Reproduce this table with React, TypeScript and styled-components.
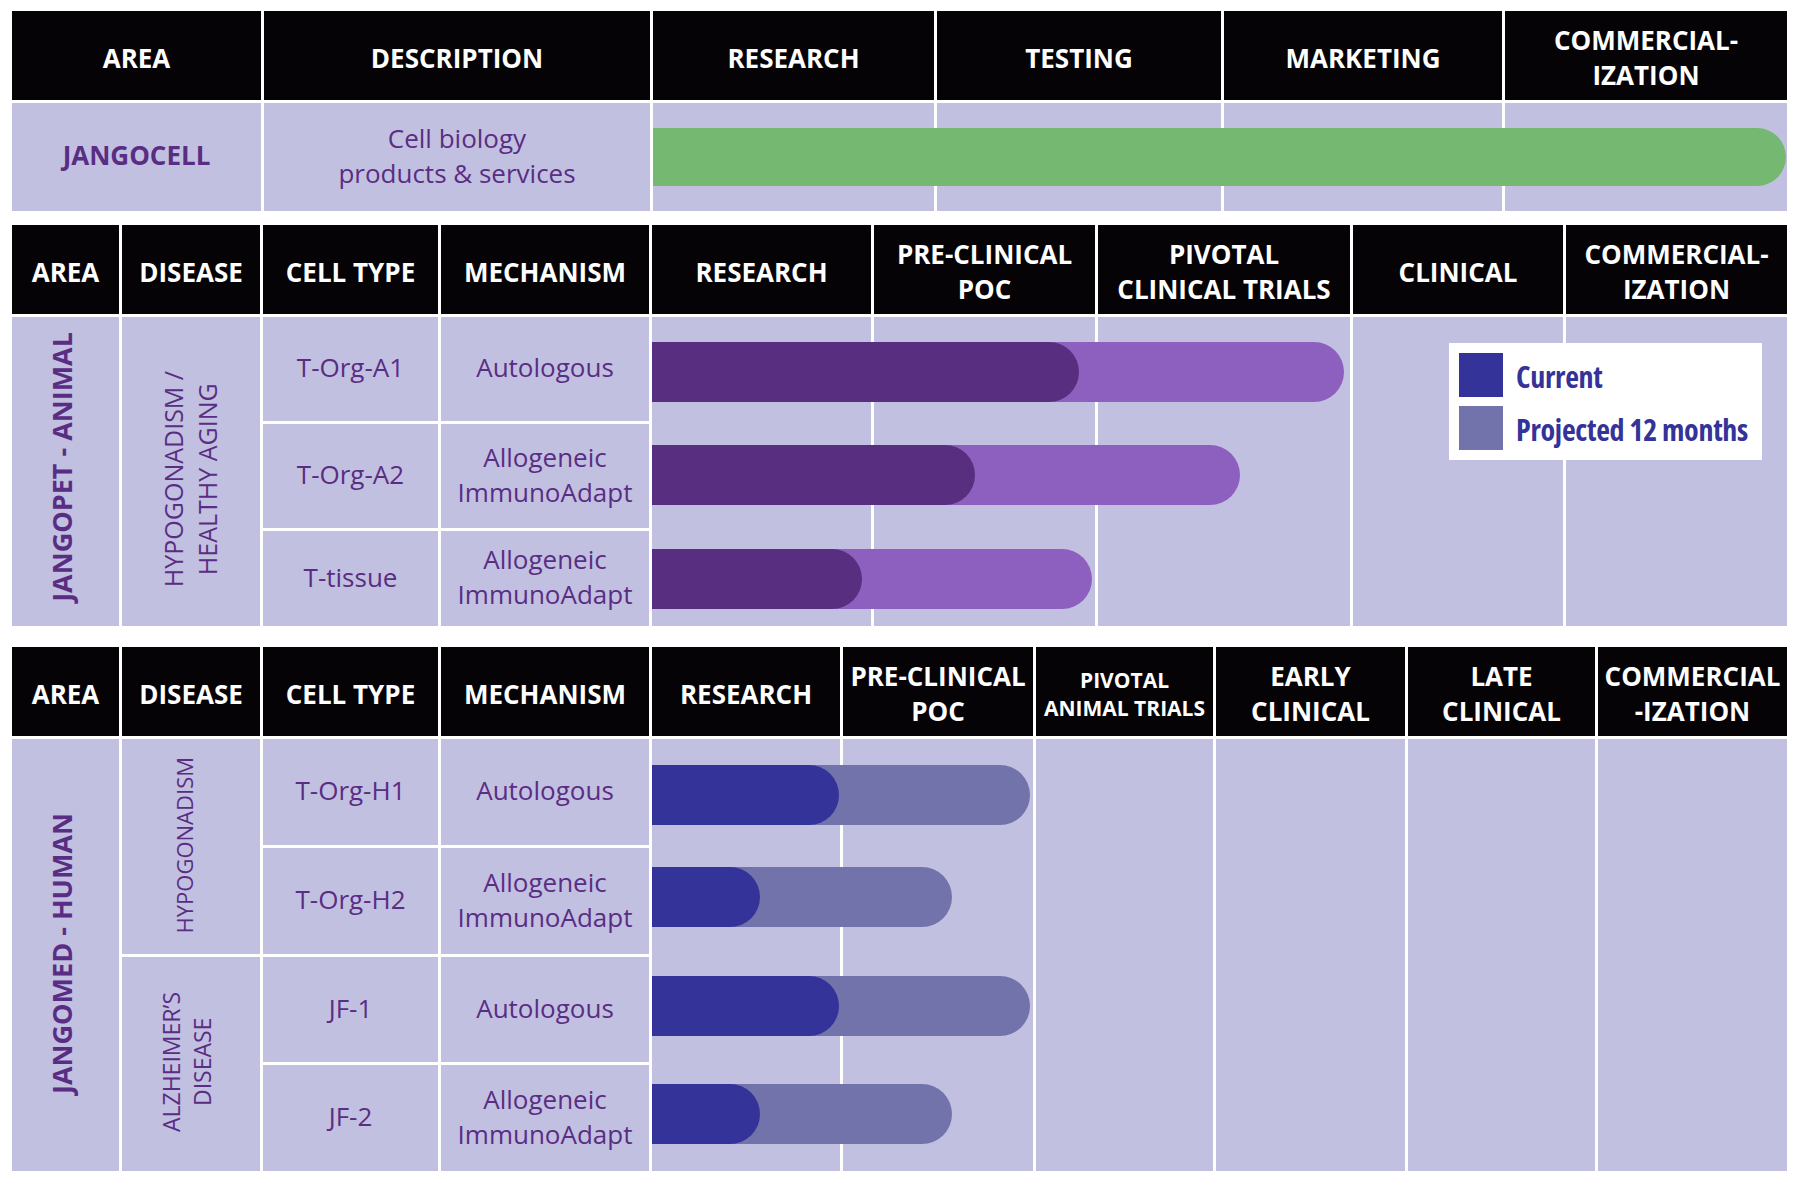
import React from "react";
import styled, { createGlobalStyle } from "styled-components";

const PURPLE = "#5a2d84";
const LAVENDER = "#c2c0e0";
const HEAD_BG = "#060306";

const GlobalStyle = createGlobalStyle`
  html, body { margin: 0; padding: 0; background: #ffffff; }
  body { font-family: "Open Sans", "Noto Sans", sans-serif; }
`;

const Page = styled.main`
  width: 1800px;
  height: 1185px;
  box-sizing: border-box;
  padding: 11px 13px 0 12px;
  display: flex;
  flex-direction: column;
  background: #ffffff;
`;

const Table = styled.section<{ $cols: number[]; $rows: number[]; $mt: number }>`
  display: grid;
  grid-template-columns: ${(p) => p.$cols.map((c) => `${c}px`).join(" ")};
  grid-template-rows: ${(p) => p.$rows.map((r) => `${r}px`).join(" ")};
  gap: 3px;
  margin-top: ${(p) => p.$mt}px;
`;

const HeadCell = styled.div<{ $small?: boolean }>`
  background: ${HEAD_BG};
  color: #ffffff;
  font-weight: 700;
  font-size: ${(p) => (p.$small ? 21 : 26)}px;
  line-height: ${(p) => (p.$small ? 28 : 35)}px;
  display: flex;
  align-items: center;
  justify-content: center;
  text-align: center;
  white-space: pre-line;
  box-sizing: border-box;
  padding-top: 5px;
`;

const BodyCell = styled.div<{ $area: string; $bold?: boolean }>`
  grid-area: ${(p) => p.$area};
  background: ${LAVENDER};
  color: ${PURPLE};
  font-weight: ${(p) => (p.$bold ? 700 : 400)};
  font-size: 26px;
  line-height: 35px;
  display: flex;
  align-items: center;
  justify-content: center;
  text-align: center;
  white-space: pre-line;
  box-sizing: border-box;
  padding-bottom: 3px;
`;

const VerticalText = styled.span<{
  $bold?: boolean;
  $size?: number;
  $lh?: number;
  $nudge?: number;
  $dy?: number;
}>`
  writing-mode: vertical-rl;
  transform: rotate(180deg);
  font-weight: ${(p) => (p.$bold ? 700 : 400)};
  font-size: ${(p) => p.$size ?? 25}px;
  line-height: ${(p) => p.$lh ?? 34}px;
  text-align: center;
  white-space: pre-line;
  margin: ${(p) => Math.max(0, (p.$dy ?? 0) * 2)}px ${(p) => (p.$nudge ?? 0) * 2}px
    ${(p) => Math.max(0, -(p.$dy ?? 0) * 2)}px 0;
`;

const PhaseStrip = styled.div<{ $col: number }>`
  grid-column: ${(p) => p.$col};
  grid-row: 2 / -1;
  background: ${LAVENDER};
`;

const BarLayer = styled.div<{ $fromCol: number }>`
  grid-column: ${(p) => p.$fromCol} / -1;
  grid-row: 2 / -1;
  display: grid;
  grid-template-rows: subgrid;
  position: relative;
`;

const BarRow = styled.div<{ $top?: number }>`
  display: flex;
  align-items: ${(p) => (p.$top === undefined ? "center" : "flex-start")};
  padding-top: ${(p) => p.$top ?? 0}px;
  box-sizing: border-box;
`;

const Pill = styled.div<{ $color: string; $h: number }>`
  height: ${(p) => p.$h}px;
  background: ${(p) => p.$color};
  border-radius: 0 ${(p) => p.$h / 2}px ${(p) => p.$h / 2}px 0;
  display: flex;
  flex: none;
`;

const Legend = styled.div`
  position: absolute;
  left: 797px;
  top: 26px;
  width: 313px;
  height: 117px;
  box-sizing: border-box;
  padding: 10px 0 0 10px;
  background: #ffffff;
  display: flex;
  flex-direction: column;
  gap: 9px;
`;

const LegendItem = styled.div`
  display: flex;
  align-items: center;
  gap: 13px;
  height: 44px;
`;

const Swatch = styled.span<{ $color: string }>`
  width: 44px;
  height: 44px;
  flex: none;
  background: ${(p) => p.$color};
`;

const LegendLabel = styled.span`
  color: #333399;
  font-weight: 700;
  font-size: 30px;
  font-stretch: 75%;
  letter-spacing: -0.3px;
  white-space: nowrap;
  padding-top: 2px;
`;

type Bar = { current: number; projected: number; top: number };

const PurpleDark = "#582e80";
const PurpleLight = "#8d5fbf";
const BlueDark = "#333399";
const BlueLight = "#7273aa";
const Green = "#74b872";

const BarPair: React.FC<{ bar: Bar; dark: string; light: string }> = ({ bar, dark, light }) => (
  <BarRow $top={bar.top}>
    <Pill $color={light} $h={60} style={{ width: bar.projected }}>
      <Pill $color={dark} $h={60} style={{ width: bar.current }} />
    </Pill>
  </BarRow>
);

const table1Cols = [249, 386, 281, 284, 278, 282];
const table1Heads = ["AREA", "DESCRIPTION", "RESEARCH", "TESTING", "MARKETING", "COMMERCIAL-\nIZATION"];

const table2Cols = [107, 138, 175, 208, 219, 221, 252, 210, 221];
const table2Heads = [
  "AREA",
  "DISEASE",
  "CELL TYPE",
  "MECHANISM",
  "RESEARCH",
  "PRE-CLINICAL\nPOC",
  "PIVOTAL\nCLINICAL TRIALS",
  "CLINICAL",
  "COMMERCIAL-\nIZATION",
];
const table2Rows = [
  { cell: "T-Org-A1", mech: "Autologous", bar: { current: 427, projected: 692, top: 25 } },
  { cell: "T-Org-A2", mech: "Allogeneic\nImmunoAdapt", bar: { current: 323, projected: 588, top: 21 } },
  { cell: "T-tissue", mech: "Allogeneic\nImmunoAdapt", bar: { current: 210, projected: 440, top: 18 } },
];

const table3Cols = [107, 138, 175, 208, 188, 190, 177, 189, 187, 189];
const table3Heads: { t: string; small?: boolean }[] = [
  { t: "AREA" },
  { t: "DISEASE" },
  { t: "CELL TYPE" },
  { t: "MECHANISM" },
  { t: "RESEARCH" },
  { t: "PRE-CLINICAL\nPOC" },
  { t: "PIVOTAL\nANIMAL TRIALS", small: true },
  { t: "EARLY\nCLINICAL" },
  { t: "LATE\nCLINICAL" },
  { t: "COMMERCIAL\n-IZATION" },
];
const table3Rows = [
  { cell: "T-Org-H1", mech: "Autologous", bar: { current: 187, projected: 378, top: 26 } },
  { cell: "T-Org-H2", mech: "Allogeneic\nImmunoAdapt", bar: { current: 108, projected: 300, top: 19 } },
  { cell: "JF-1", mech: "Autologous", bar: { current: 187, projected: 378, top: 19 } },
  { cell: "JF-2", mech: "Allogeneic\nImmunoAdapt", bar: { current: 108, projected: 300, top: 19 } },
];

const range = (from: number, to: number) => Array.from({ length: to - from + 1 }, (_, i) => from + i);

export default function App() {
  return (
    <>
      <GlobalStyle />
      <Page>
        {/* Table 1 */}
        <Table $cols={table1Cols} $rows={[89, 108]} $mt={0}>
          {table1Heads.map((h) => (
            <HeadCell key={h}>{h}</HeadCell>
          ))}
          <BodyCell $area="2 / 1 / 3 / 2" $bold>
            JANGOCELL
          </BodyCell>
          <BodyCell $area="2 / 2 / 3 / 3">{"Cell biology\nproducts & services"}</BodyCell>
          {range(3, 6).map((c) => (
            <PhaseStrip key={c} $col={c} />
          ))}
          <BarLayer $fromCol={3}>
            <BarRow>
              <Pill $color={Green} $h={58} style={{ width: 1133 }} />
            </BarRow>
          </BarLayer>
        </Table>

        {/* Table 2 */}
        <Table $cols={table2Cols} $rows={[89, 104, 104, 95]} $mt={14}>
          {table2Heads.map((h) => (
            <HeadCell key={h}>{h}</HeadCell>
          ))}
          <BodyCell $area="2 / 1 / -1 / 2" $bold>
            <VerticalText $bold $size={27} $nudge={3.5} $dy={-3}>
              JANGOPET - ANIMAL
            </VerticalText>
          </BodyCell>
          <BodyCell $area="2 / 2 / -1 / 3">
            <VerticalText $nudge={1.5} $dy={9}>
              {"HYPOGONADISM /\nHEALTHY AGING"}
            </VerticalText>
          </BodyCell>
          {table2Rows.map((r, i) => (
            <React.Fragment key={r.cell}>
              <BodyCell $area={`${i + 2} / 3 / ${i + 3} / 4`}>{r.cell}</BodyCell>
              <BodyCell $area={`${i + 2} / 4 / ${i + 3} / 5`}>{r.mech}</BodyCell>
            </React.Fragment>
          ))}
          {range(5, 9).map((c) => (
            <PhaseStrip key={c} $col={c} />
          ))}
          <BarLayer $fromCol={5}>
            {table2Rows.map((r) => (
              <BarPair key={r.cell} bar={r.bar} dark={PurpleDark} light={PurpleLight} />
            ))}
            <Legend>
              <LegendItem>
                <Swatch $color={BlueDark} />
                <LegendLabel>Current</LegendLabel>
              </LegendItem>
              <LegendItem>
                <Swatch $color={BlueLight} />
                <LegendLabel>Projected 12 months</LegendLabel>
              </LegendItem>
            </Legend>
          </BarLayer>
        </Table>

        {/* Table 3 */}
        <Table $cols={table3Cols} $rows={[89, 106, 106, 105, 106]} $mt={21}>
          {table3Heads.map((h) => (
            <HeadCell key={h.t} $small={h.small}>
              {h.t}
            </HeadCell>
          ))}
          <BodyCell $area="2 / 1 / -1 / 2" $bold>
            <VerticalText $bold $size={27} $nudge={3.5}>
              JANGOMED - HUMAN
            </VerticalText>
          </BodyCell>
          <BodyCell $area="2 / 2 / 4 / 3">
            <VerticalText $size={22} $nudge={7}>
              HYPOGONADISM
            </VerticalText>
          </BodyCell>
          <BodyCell $area="4 / 2 / 6 / 3">
            <VerticalText $size={23} $lh={31} $nudge={4}>
              {"ALZHEIMER\u2019S\nDISEASE"}
            </VerticalText>
          </BodyCell>
          {table3Rows.map((r, i) => (
            <React.Fragment key={r.cell}>
              <BodyCell $area={`${i + 2} / 3 / ${i + 3} / 4`}>{r.cell}</BodyCell>
              <BodyCell $area={`${i + 2} / 4 / ${i + 3} / 5`}>{r.mech}</BodyCell>
            </React.Fragment>
          ))}
          {range(5, 10).map((c) => (
            <PhaseStrip key={c} $col={c} />
          ))}
          <BarLayer $fromCol={5}>
            {table3Rows.map((r) => (
              <BarPair key={r.cell} bar={r.bar} dark={BlueDark} light={BlueLight} />
            ))}
          </BarLayer>
        </Table>
      </Page>
    </>
  );
}
